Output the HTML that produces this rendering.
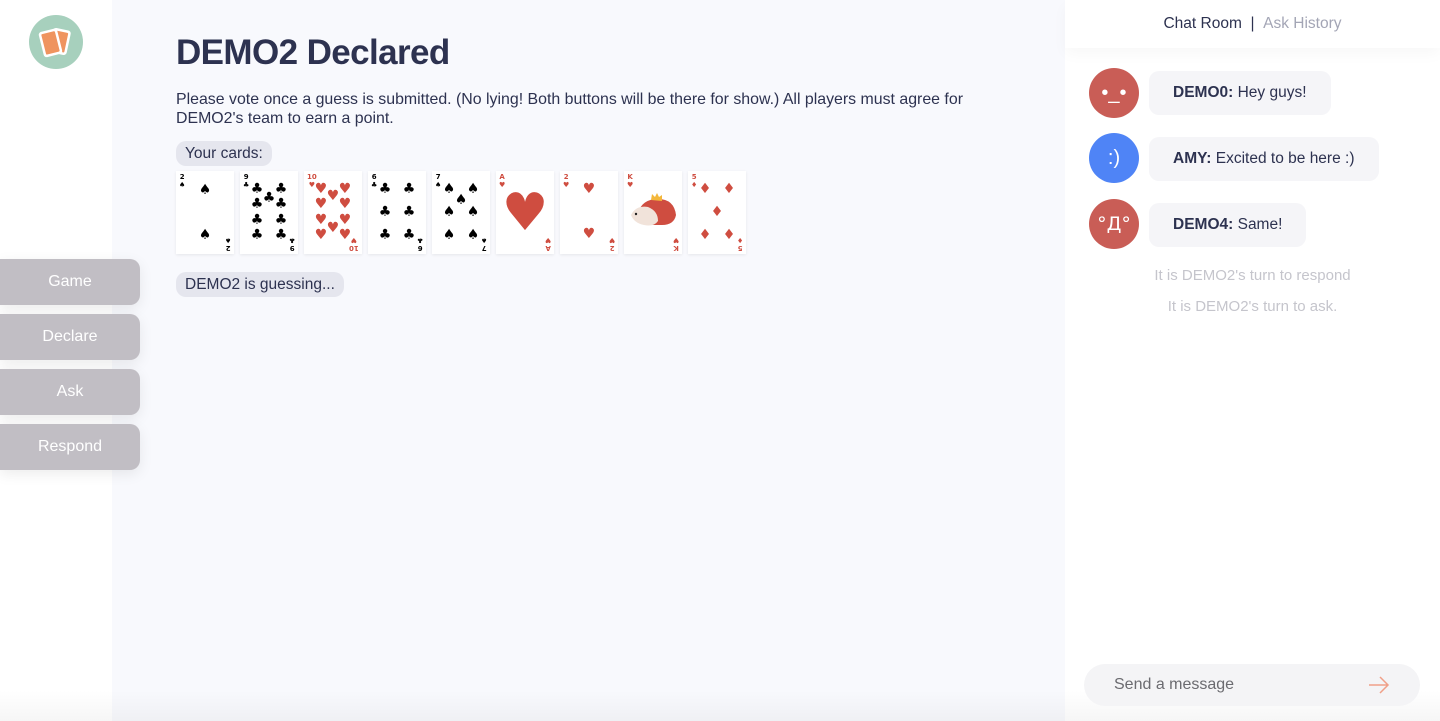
<!DOCTYPE html>
<html><head><meta charset="utf-8"><style>
*{margin:0;padding:0;box-sizing:border-box}
body{width:1440px;height:721px;overflow:hidden;font-family:"Liberation Sans",sans-serif;background:#fff;position:relative;color:#2d3250}
.main{position:absolute;left:112px;top:0;width:953px;height:721px;background:#f8f9fd}
.abs{position:absolute}
h1{position:absolute;left:176px;top:33px;font-size:35px;font-weight:bold;color:#2d3250;letter-spacing:-0.6px}
.p{position:absolute;left:176px;top:90px;font-size:15.9px;line-height:19px;width:830px;color:#2d3250}
.pill{position:absolute;left:176px;height:25px;line-height:25px;padding:0 9px;background:#e5e6ee;border-radius:10px;font-size:15.5px;color:#2d3250}
.btn{position:absolute;left:0;width:140px;height:46px;background:#c1bec4;border-radius:0 10px 10px 0;color:#fff;text-align:center;line-height:46px;font-size:16px;box-shadow:0 4px 14px rgba(0,0,0,.08)}
.card{position:absolute;top:171px;width:58px;height:83px;background:#fff;box-shadow:0 1px 3px rgba(0,0,0,.08);font-family:"DejaVu Sans",sans-serif}
.card span{position:absolute;transform:translate(-50%,-50%);font-size:14px;line-height:1}
.r{color:#cf4d40}.b{color:#000}
.ci{position:absolute;left:3px;top:2px;font-size:7px;line-height:8px;text-align:center;font-weight:bold}
.cb{position:absolute;right:3px;bottom:2px;font-size:7px;line-height:8px;text-align:center;transform:rotate(180deg);font-weight:bold}
.av{position:absolute;left:1089px;width:50px;height:50px;border-radius:50%;color:#fff;text-align:center;line-height:50px;font-size:20px}
.bub{position:absolute;left:1149px;height:44px;line-height:44px;padding:0 24px;background:#f5f5f8;border-radius:10px;font-size:15.5px;color:#2d3250}
.st{position:absolute;left:1065px;width:375px;text-align:center;color:#c5c5cc;font-size:15px}
</style></head><body>
<div class="main"></div>
<div class="abs" style="left:1065px;top:0;width:375px;height:48px;box-shadow:0 6px 14px rgba(0,0,0,.03)"></div>
<div class="abs" style="left:0;top:690px;width:1440px;height:31px;background:linear-gradient(rgba(0,0,0,0),rgba(0,0,0,.035))"></div>
<svg class="abs" style="left:29px;top:15px" width="54" height="54" viewBox="0 0 54 54">
<circle cx="27" cy="27" r="27" fill="#a7d0bd"/>
<rect x="22" y="14" width="18" height="25" rx="3" fill="#fff" transform="rotate(12 31 26)"/>
<rect x="24.5" y="16.5" width="13" height="20" rx="1" fill="#ef945f" transform="rotate(12 31 26)"/>
<rect x="12" y="15" width="19" height="26" rx="3" fill="#fff" transform="rotate(-14 21 28)"/>
<rect x="14.5" y="17.5" width="14" height="21" rx="1" fill="#ef945f" transform="rotate(-14 21 28)"/>
</svg>
<div class="btn" style="top:259px">Game</div>
<div class="btn" style="top:314px">Declare</div>
<div class="btn" style="top:369px">Ask</div>
<div class="btn" style="top:424px">Respond</div>
<h1>DEMO2 Declared</h1>
<div class="p">Please vote once a guess is submitted. (No lying! Both buttons will be there for show.) All players must agree for DEMO2's team to earn a point.</div>
<div class="pill" style="top:141px">Your cards:</div>
<div class="pill" style="top:272px">DEMO2 is guessing...</div>

<div class="card b" style="left:176px"><div class="ci">2<br>♠</div><div class="cb">2<br>♠</div><span style="left:29px;top:19px">♠</span><span style="left:29px;top:64px">♠</span></div>
<div class="card b" style="left:240px"><div class="ci">9<br>♣</div><div class="cb">9<br>♣</div>
<span style="left:17px;top:18px">♣</span><span style="left:41px;top:18px">♣</span><span style="left:17px;top:33px">♣</span><span style="left:41px;top:33px">♣</span><span style="left:29px;top:27px">♣</span><span style="left:17px;top:49px">♣</span><span style="left:41px;top:49px">♣</span><span style="left:17px;top:64px">♣</span><span style="left:41px;top:64px">♣</span></div>
<div class="card r" style="left:304px"><div class="ci">10<br>♥</div><div class="cb">10<br>♥</div>
<span style="left:17px;top:18px">♥</span><span style="left:41px;top:18px">♥</span><span style="left:17px;top:33px">♥</span><span style="left:41px;top:33px">♥</span><span style="left:29px;top:25px">♥</span><span style="left:17px;top:49px">♥</span><span style="left:41px;top:49px">♥</span><span style="left:29px;top:57px">♥</span><span style="left:17px;top:64px">♥</span><span style="left:41px;top:64px">♥</span></div>
<div class="card b" style="left:368px"><div class="ci">6<br>♣</div><div class="cb">6<br>♣</div>
<span style="left:17px;top:18px">♣</span><span style="left:41px;top:18px">♣</span><span style="left:17px;top:41px">♣</span><span style="left:41px;top:41px">♣</span><span style="left:17px;top:64px">♣</span><span style="left:41px;top:64px">♣</span></div>
<div class="card b" style="left:432px"><div class="ci">7<br>♠</div><div class="cb">7<br>♠</div>
<span style="left:17px;top:18px">♠</span><span style="left:41px;top:18px">♠</span><span style="left:29px;top:29px">♠</span><span style="left:17px;top:41px">♠</span><span style="left:41px;top:41px">♠</span><span style="left:17px;top:64px">♠</span><span style="left:41px;top:64px">♠</span></div>
<div class="card r" style="left:496px"><div class="ci">A<br>♥</div><div class="cb">A<br>♥</div><span style="left:29px;top:42px;font-size:52px">♥</span></div>
<div class="card r" style="left:560px"><div class="ci">2<br>♥</div><div class="cb">2<br>♥</div><span style="left:29px;top:18px">♥</span><span style="left:29px;top:63px">♥</span></div>
<div class="card r" style="left:624px"><div class="ci">K<br>♥</div><div class="cb">K<br>♥</div>
<svg style="position:absolute;left:4px;top:20px" width="52" height="40" viewBox="0 0 52 40">
<path d="M10 22 Q14 8 30 8 Q46 8 48 24 Q46 34 34 34 L18 34 Q8 32 10 22Z" fill="#cf4d40"/>
<path d="M3 24 Q8 14 20 16 Q30 20 30 30 Q26 36 16 34 Q6 32 3 24Z" fill="#f1e3da"/>
<path d="M23 9 L24 3 L27 6 L29 2 L31 6 L34 4 L34 10Z" fill="#f3b73b"/>
<circle cx="8" cy="23" r="1.2" fill="#222"/></svg></div>
<div class="card r" style="left:688px"><div class="ci">5<br>♦</div><div class="cb">5<br>♦</div>
<span style="left:17px;top:18px">♦</span><span style="left:41px;top:18px">♦</span><span style="left:29px;top:41px">♦</span><span style="left:17px;top:64px">♦</span><span style="left:41px;top:64px">♦</span></div>

<div class="abs" style="left:1065px;top:15px;width:375px;text-align:center;font-size:15.5px"><span style="color:#2d3250">Chat Room</span><span style="color:#2d3250">&nbsp;&nbsp;|&nbsp;&nbsp;</span><span style="color:#a3a5b5">Ask History</span></div>
<div class="av" style="top:68px;background:#c95d56">•_•</div>
<div class="bub" style="top:71px"><b>DEMO0:</b> Hey guys!</div>
<div class="av" style="top:133px;background:#4f84f6">:)</div>
<div class="bub" style="top:137px"><b>AMY:</b> Excited to be here :)</div>
<div class="av" style="top:199px;background:#c95d56;font-family:'DejaVu Sans',sans-serif;font-size:19px">°Д°</div>
<div class="bub" style="top:203px"><b>DEMO4:</b> Same!</div>
<div class="st" style="top:267px">It is DEMO2's turn to respond</div>
<div class="st" style="top:298px">It is DEMO2's turn to ask.</div>
<div class="abs" style="left:1084px;top:664px;width:336px;height:42px;border-radius:21px;background:#f4f4f6;font-size:16px;color:#6b6b70;line-height:42px;padding-left:30px">Send a message</div>
<svg class="abs" style="left:1368px;top:676px" width="22" height="18" viewBox="0 0 22 18"><path d="M1 9H20M12 1L20 9L12 17" stroke="#f0a088" stroke-width="1.5" fill="none"/></svg>
</body></html>
